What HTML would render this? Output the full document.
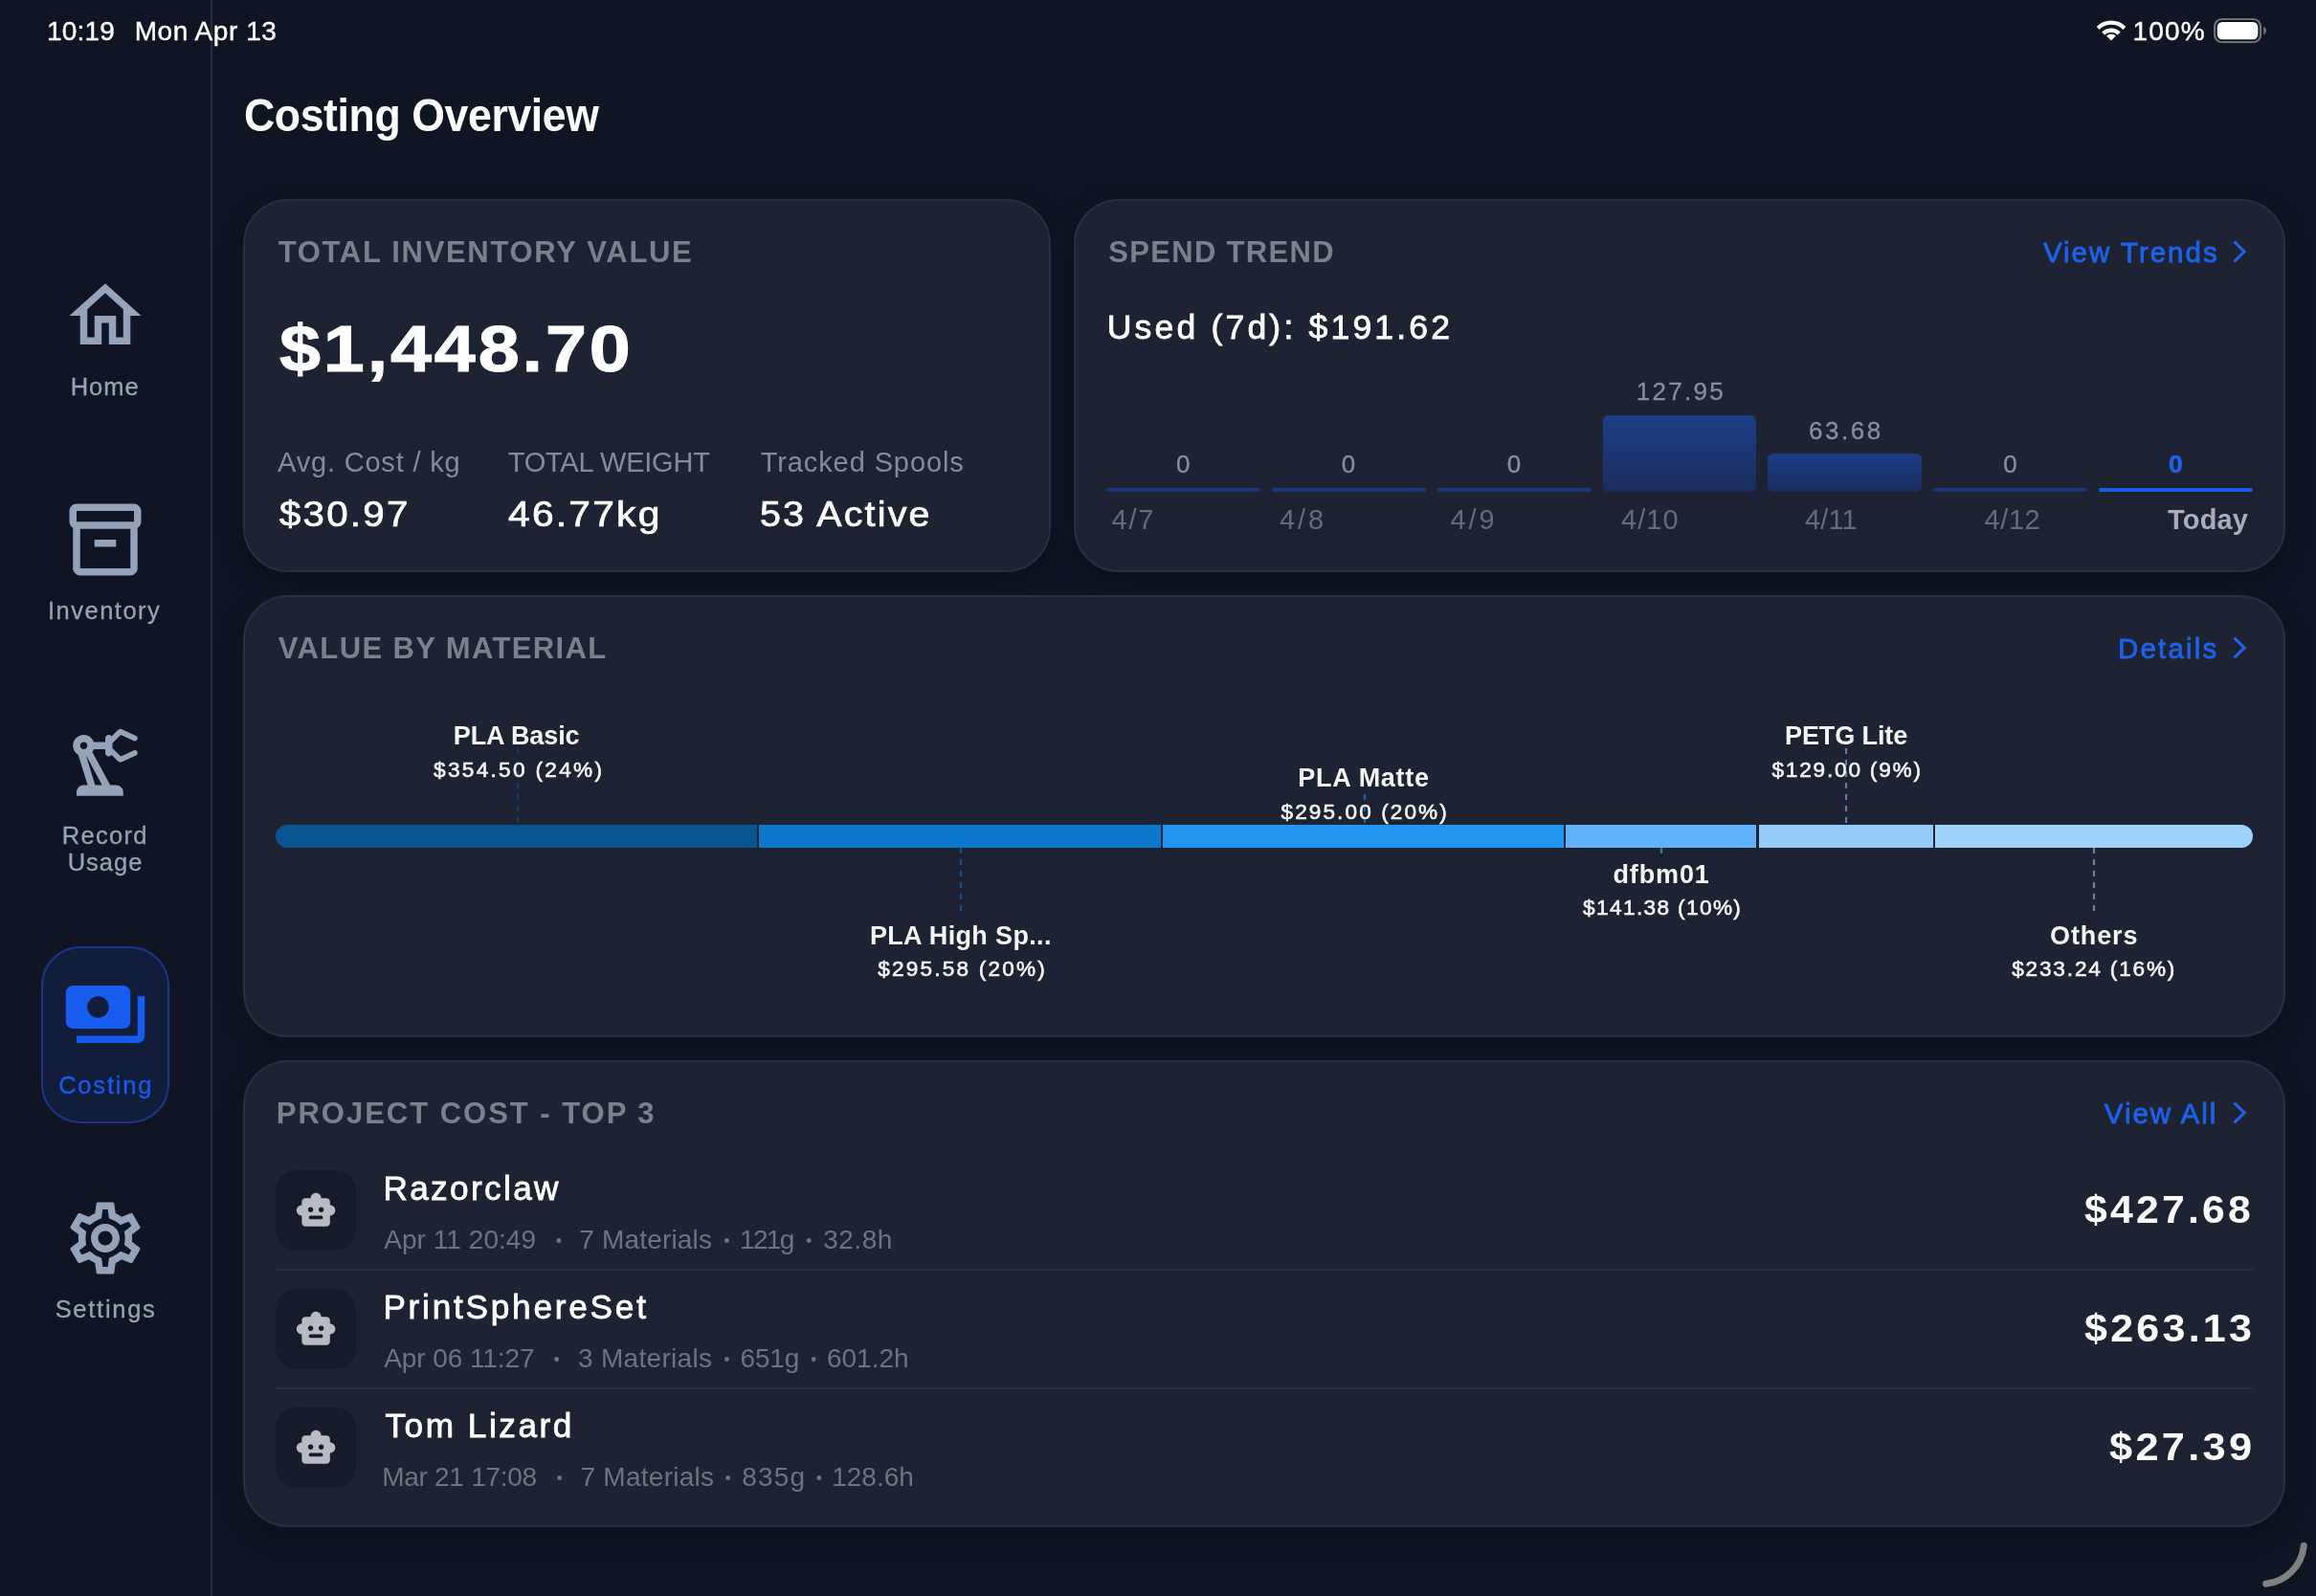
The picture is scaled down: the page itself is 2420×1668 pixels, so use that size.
<!DOCTYPE html>
<html lang="en"><head><meta charset="utf-8"><title>Costing Overview</title>
<style>
html,body{margin:0;padding:0;}
body{width:2420px;height:1668px;overflow:hidden;background:#0f1522;position:relative;font-family:"Liberation Sans",sans-serif;}
.t{position:absolute;white-space:nowrap;}
.ic{position:absolute;display:block;}
.card{position:absolute;background:#1d2333;border:2px solid #28303d;border-radius:47px;box-sizing:border-box;box-shadow:0 8px 24px rgba(0,0,0,.25);}
.abs{position:absolute;}
</style></head><body><div id="app" style="position:absolute;left:0;top:0;width:2420px;height:1668px;will-change:transform;">
<div class="abs" style="left:0;top:0;width:220px;height:1668px;background:#0f1522;border-right:2px solid #262e3b;"></div>
<div class="t" style="left:49.00px;top:19px;font-size:28px;line-height:28px;color:#ffffff;letter-spacing:0.20px;-webkit-text-stroke:0.4px #ffffff;">10:19</div>
<div class="t" style="left:140.70px;top:19px;font-size:28px;line-height:28px;color:#ffffff;letter-spacing:0.55px;-webkit-text-stroke:0.4px #ffffff;">Mon Apr 13</div>
<div class="t" style="left:2228.60px;top:19px;font-size:28px;line-height:28px;color:#ffffff;letter-spacing:1.16px;-webkit-text-stroke:0.4px #ffffff;">100%</div>
<svg class="ic" style="left:2189px;top:19px" width="34" height="26" viewBox="0 0 34 26"><g fill="none" stroke="#fff" stroke-width="4.2"><path d="M3.2 10.4a19.6 19.6 0 0 1 27.6 0"/><path d="M8.7 16a11.8 11.8 0 0 1 16.6 0"/></g><path d="M17 23.6l-4.9-5.1a7 7 0 0 1 9.8 0z" fill="#fff"/></svg>
<svg class="ic" style="left:2311px;top:17px" width="60" height="30" viewBox="0 0 60 30"><rect x="3.1" y="3" width="48" height="24" rx="7.5" fill="none" stroke="#6d717c" stroke-width="2.2"/><rect x="5.8" y="5.9" width="42.6" height="18.3" rx="5.2" fill="#fff"/><path d="M54.2 10.8v8.4c1.9-.7 2.8-2.3 2.8-4.2s-.9-3.5-2.8-4.2z" fill="#6d717c"/></svg>
<svg class="ic" style="left:65.0px;top:285.1px" width="90" height="90" viewBox="0 0 24 24" fill="#94a3b8"><path d="M12 5.69l5 4.5V18h-2v-6H9v6H7v-7.81l5-4.5M12 3L2 12h3v8h6v-6h2v6h6v-8h3L12 3z"/></svg>
<div class="t" style="left:73.75px;top:392px;font-size:25.5px;line-height:25.5px;color:#94a3b8;letter-spacing:0.95px;-webkit-text-stroke:0.3px #94a3b8;">Home</div>
<svg class="ic" style="left:65.0px;top:519px" width="90" height="90" viewBox="0 0 24 24" fill="#94a3b8"><path d="M20 2H4c-1 0-2 .9-2 2v3.01c0 .72.43 1.34 1 1.69V20c0 1.1 1.1 2 2 2h14c.9 0 2-.9 2-2V8.7c.57-.35 1-.97 1-1.69V4c0-1.1-1-2-2-2zm-1 18H5V9h14v11zm1-13H4V4h16v3z"/><path d="M9 12h6v2H9z"/></svg>
<div class="t" style="left:49.95px;top:626px;font-size:25.5px;line-height:25.5px;color:#94a3b8;letter-spacing:1.50px;-webkit-text-stroke:0.3px #94a3b8;">Inventory</div>
<svg class="ic" style="left:65.0px;top:753px" width="90" height="90" viewBox="0 0 24 24" fill="#94a3b8"><path d="M19.93 8.35l-3.6 1.68L14 7.7V6.3l2.33-2.33 3.6 1.68c.38.18.82.01 1-.36.18-.38.01-.82-.36-1l-3.92-1.83c-.38-.18-.83-.1-1.13.2L13.78 4.4c-.18-.24-.46-.4-.78-.4-.55 0-1 .45-1 1v1H8.82C8.4 4.84 7.3 4 6 4 4.34 4 3 5.34 3 7c0 1.1.6 2.05 1.48 2.58L7.08 18H6c-1.1 0-2 .9-2 2v1h13v-1c0-1.1-.9-2-2-2h-1.62L8.41 8.77c.17-.24.31-.49.41-.77H12v1c0 .55.45 1 1 1 .32 0 .6-.16.78-.4l1.74 1.74c.3.3.75.38 1.13.2l3.92-1.83c.38-.18.54-.62.36-1-.18-.37-.62-.54-1-.36zM6 8c-.55 0-1-.45-1-1s.45-1 1-1 1 .45 1 1-.45 1-1 1zm5.11 10H9.17l-2.46-8h.1l4.3 8z"/></svg>
<div class="t" style="left:64.85px;top:861px;font-size:25.5px;line-height:25.5px;color:#94a3b8;letter-spacing:1.26px;-webkit-text-stroke:0.3px #94a3b8;">Record</div>
<div class="t" style="left:70.65px;top:889px;font-size:25.5px;line-height:25.5px;color:#94a3b8;letter-spacing:0.99px;-webkit-text-stroke:0.3px #94a3b8;">Usage</div>
<div class="abs" style="left:43px;top:989px;width:134px;height:185px;box-sizing:border-box;border-radius:41px;background:#111d3a;border:2px solid #17378a;"></div>
<svg class="ic" style="left:65.0px;top:1015px" width="90" height="90" viewBox="0 0 24 24" fill="#175cee"><path d="M19 14V6c0-1.1-.9-2-2-2H3c-1.1 0-2 .9-2 2v8c0 1.1.9 2 2 2h14c1.1 0 2-.9 2-2zm-9-1c-1.66 0-3-1.34-3-3s1.34-3 3-3 3 1.34 3 3-1.34 3-3 3zm13-6v11c0 1.1-.9 2-2 2H4v-2h17V7h2z"/></svg>
<div class="t" style="left:61.15px;top:1122px;font-size:25.5px;line-height:25.5px;color:#175cee;letter-spacing:1.80px;-webkit-text-stroke:0.3px #175cee;">Costing</div>
<svg class="ic" style="left:65.0px;top:1249px" width="90" height="90" viewBox="0 0 24 24" fill="#94a3b8"><path d="M19.43 12.98c.04-.32.07-.64.07-.98 0-.34-.03-.66-.07-.98l2.11-1.65c.19-.15.24-.42.12-.64l-2-3.46c-.09-.16-.26-.25-.44-.25-.06 0-.12.01-.17.03l-2.49 1c-.52-.4-1.08-.73-1.69-.98l-.38-2.65C14.46 2.18 14.25 2 14 2h-4c-.25 0-.46.18-.49.42l-.38 2.65c-.61.25-1.17.59-1.69.98l-2.49-1c-.06-.02-.12-.03-.18-.03-.17 0-.34.09-.43.25l-2 3.46c-.13.22-.07.49.12.64l2.11 1.65c-.04.32-.07.65-.07.98 0 .33.03.66.07.98l-2.11 1.65c-.19.15-.24.42-.12.64l2 3.46c.09.16.26.25.44.25.06 0 .12-.01.17-.03l2.49-1c.52.4 1.08.73 1.69.98l.38 2.65c.03.24.24.42.49.42h4c.25 0 .46-.18.49-.42l.38-2.65c.61-.25 1.17-.59 1.69-.98l2.49 1c.06.02.12.03.18.03.17 0 .34-.09.43-.25l2-3.46c.12-.22.07-.49-.12-.64l-2.11-1.65zm-1.98-1.71c.04.31.05.52.05.73 0 .21-.02.43-.05.73l-.14 1.13.89.7 1.08.84-.7 1.21-1.27-.51-1.04-.42-.9.68c-.43.32-.84.56-1.25.73l-1.06.43-.16 1.13-.2 1.35h-1.4l-.19-1.35-.16-1.13-1.06-.43c-.43-.18-.83-.41-1.23-.71l-.91-.7-1.06.43-1.27.51-.7-1.21 1.08-.84.89-.7-.14-1.13c-.03-.31-.05-.54-.05-.74s.02-.43.05-.73l.14-1.13-.89-.7-1.08-.84.7-1.21 1.27.51 1.04.42.9-.68c.43-.32.84-.56 1.25-.73l1.06-.43.16-1.13.2-1.35h1.39l.19 1.35.16 1.13 1.06.43c.43.18.83.41 1.23.71l.91.7 1.06-.43 1.27-.51.7 1.21-1.07.85-.89.7.14 1.13zM12 8c-2.21 0-4 1.79-4 4s1.79 4 4 4 4-1.79 4-4-1.79-4-4-4zm0 6c-1.1 0-2-.9-2-2s.9-2 2-2 2 .9 2 2-.9 2-2 2z"/></svg>
<div class="t" style="left:57.65px;top:1356px;font-size:25.5px;line-height:25.5px;color:#94a3b8;letter-spacing:1.72px;-webkit-text-stroke:0.3px #94a3b8;">Settings</div>
<div class="t" style="left:254.76px;top:97px;font-size:47.5px;line-height:47.5px;color:#fff;font-weight:700;letter-spacing:-0.40px;transform:scaleX(0.9386);transform-origin:0 0;">Costing Overview</div>
<div class="card" style="left:254px;top:208px;width:844px;height:390px"></div>
<div class="card" style="left:1122px;top:208px;width:1266px;height:390px"></div>
<div class="card" style="left:254px;top:622px;width:2134px;height:462px"></div>
<div class="card" style="left:254px;top:1108px;width:2134px;height:488px"></div>
<div class="t" style="left:290.70px;top:248px;font-size:31px;line-height:31px;color:#7b808b;font-weight:700;letter-spacing:1.68px;">TOTAL INVENTORY VALUE</div>
<div class="t" style="left:291.77px;top:330px;font-size:68px;line-height:68px;color:#fff;font-weight:700;letter-spacing:2.50px;-webkit-text-stroke:1.0px #fff;transform:scaleX(1.1371);transform-origin:0 0;">$1,448.70</div>
<div class="t" style="left:290.00px;top:469px;font-size:29px;line-height:29px;color:#868b95;letter-spacing:0.82px;">Avg. Cost / kg</div>
<div class="t" style="left:530.75px;top:469px;font-size:29px;line-height:29px;color:#868b95;letter-spacing:-0.24px;">TOTAL WEIGHT</div>
<div class="t" style="left:794.70px;top:469px;font-size:29px;line-height:29px;color:#868b95;letter-spacing:0.90px;">Tracked Spools</div>
<div class="t" style="left:291.59px;top:520px;font-size:36.2px;line-height:36.2px;color:#fff;letter-spacing:2.00px;-webkit-text-stroke:0.7px #fff;transform:scaleX(1.1126);transform-origin:0 0;">$30.97</div>
<div class="t" style="left:531.14px;top:520px;font-size:36.2px;line-height:36.2px;color:#fff;letter-spacing:2.00px;-webkit-text-stroke:0.7px #fff;transform:scaleX(1.1249);transform-origin:0 0;">46.77kg</div>
<div class="t" style="left:793.99px;top:520px;font-size:36.2px;line-height:36.2px;color:#fff;letter-spacing:2.00px;-webkit-text-stroke:0.7px #fff;transform:scaleX(1.0898);transform-origin:0 0;">53 Active</div>
<div class="t" style="left:1158.25px;top:248px;font-size:31px;line-height:31px;color:#7b808b;font-weight:700;letter-spacing:1.32px;">SPEND TREND</div>
<div class="t" style="left:2134.90px;top:249px;font-size:29.5px;line-height:29.5px;color:#1d62ea;letter-spacing:2.00px;-webkit-text-stroke:0.8px #1d62ea;">View Trends</div>
<svg class="ic" style="left:2329.8px;top:249.2px" width="20" height="28" viewBox="0 0 20 28"><path d="M4.6 3.6L15.1 14 4.6 24.4" fill="none" stroke="#1d62ea" stroke-width="3" stroke-linecap="butt" stroke-linejoin="miter"/></svg>
<div class="t" style="left:1156.65px;top:325px;font-size:35.6px;line-height:35.6px;color:#fff;letter-spacing:3.17px;-webkit-text-stroke:0.8px #fff;">Used (7d): $191.62</div>
<div class="abs" style="left:1156.00px;top:509.8px;width:160.86px;height:4.0px;background:linear-gradient(180deg,#1d3d88 0%,#1b3168 100%);border-radius:2px"></div>
<div class="t" style="left:1228.93px;top:472px;font-size:26px;line-height:26px;color:#8a8f99;-webkit-text-stroke:0.3px #8a8f99;">0</div>
<div class="abs" style="left:1328.86px;top:509.8px;width:160.86px;height:4.0px;background:linear-gradient(180deg,#1d3d88 0%,#1b3168 100%);border-radius:2px"></div>
<div class="t" style="left:1401.79px;top:472px;font-size:26px;line-height:26px;color:#8a8f99;-webkit-text-stroke:0.3px #8a8f99;">0</div>
<div class="abs" style="left:1501.72px;top:509.8px;width:160.86px;height:4.0px;background:linear-gradient(180deg,#1d3d88 0%,#1b3168 100%);border-radius:2px"></div>
<div class="t" style="left:1574.65px;top:472px;font-size:26px;line-height:26px;color:#8a8f99;-webkit-text-stroke:0.3px #8a8f99;">0</div>
<div class="abs" style="left:1674.58px;top:434.2px;width:160.86px;height:79.6px;background:linear-gradient(180deg,#1c3d86 0%,#1b2d5e 100%);border-radius:6px"></div>
<div class="t" style="left:1709.85px;top:396px;font-size:26px;line-height:26px;color:#8a8f99;letter-spacing:2.29px;-webkit-text-stroke:0.3px #8a8f99;">127.95</div>
<div class="abs" style="left:1847.44px;top:474.3px;width:160.86px;height:39.5px;background:linear-gradient(180deg,#1c3d86 0%,#1b2d5e 100%);border-radius:6px"></div>
<div class="t" style="left:1889.95px;top:437px;font-size:26px;line-height:26px;color:#8a8f99;letter-spacing:2.57px;-webkit-text-stroke:0.3px #8a8f99;">63.68</div>
<div class="abs" style="left:2020.30px;top:509.8px;width:160.86px;height:4.0px;background:linear-gradient(180deg,#1d3d88 0%,#1b3168 100%);border-radius:2px"></div>
<div class="t" style="left:2093.23px;top:472px;font-size:26px;line-height:26px;color:#8a8f99;-webkit-text-stroke:0.3px #8a8f99;">0</div>
<div class="abs" style="left:2193.16px;top:509.8px;width:160.86px;height:4.0px;background:#185de2;border-radius:2px"></div>
<div class="t" style="left:2266.09px;top:472px;font-size:26.5px;line-height:26.5px;color:#1c64ec;font-weight:700;-webkit-text-stroke:0.5px #1c64ec;">0</div>
<div class="t" style="left:1161.60px;top:529px;font-size:29px;line-height:29px;color:#666b76;letter-spacing:1.76px;">4/7</div>
<div class="t" style="left:1337.00px;top:529px;font-size:29px;line-height:29px;color:#666b76;letter-spacing:2.91px;">4/8</div>
<div class="t" style="left:1515.50px;top:529px;font-size:29px;line-height:29px;color:#666b76;letter-spacing:2.91px;">4/9</div>
<div class="t" style="left:1693.90px;top:529px;font-size:29px;line-height:29px;color:#666b76;letter-spacing:1.13px;">4/10</div>
<div class="t" style="left:1886.00px;top:529px;font-size:29px;line-height:29px;color:#666b76;letter-spacing:0.15px;">4/11</div>
<div class="t" style="left:2073.60px;top:529px;font-size:29px;line-height:29px;color:#666b76;letter-spacing:0.56px;">4/12</div>
<div class="t" style="left:2265.10px;top:529px;font-size:29px;line-height:29px;color:#aaadb6;font-weight:700;letter-spacing:0.15px;">Today</div>
<div class="t" style="left:290.80px;top:662px;font-size:31px;line-height:31px;color:#7b808b;font-weight:700;letter-spacing:1.38px;">VALUE BY MATERIAL</div>
<div class="t" style="left:2213.10px;top:663px;font-size:29.5px;line-height:29.5px;color:#1d62ea;letter-spacing:2.16px;-webkit-text-stroke:0.8px #1d62ea;">Details</div>
<svg class="ic" style="left:2329.8px;top:662.6px" width="20" height="28" viewBox="0 0 20 28"><path d="M4.6 3.6L15.1 14 4.6 24.4" fill="none" stroke="#1d62ea" stroke-width="3" stroke-linecap="butt" stroke-linejoin="miter"/></svg>
<div class="abs" style="left:288px;top:862px;width:2066px;height:24px;border-radius:12px;overflow:hidden;background:#1d2333"><div class="abs" style="left:0.0px;top:0;width:503.0px;height:24px;background:#08548e"></div><div class="abs" style="left:505.0px;top:0;width:419.7px;height:24px;background:#0d77cc"></div><div class="abs" style="left:926.7px;top:0;width:419.2px;height:24px;background:#2196f3"></div><div class="abs" style="left:1347.9px;top:0;width:199.6px;height:24px;background:#5fb2f7"></div><div class="abs" style="left:1549.5px;top:0;width:182.0px;height:24px;background:#93cbf9"></div><div class="abs" style="left:1733.5px;top:0;width:332.5px;height:24px;background:#a0d3fb"></div></div>
<svg class="ic" style="left:538.9px;top:782px" width="4" height="80" viewBox="0 0 4 80"><line x1="2" y1="0" x2="2" y2="80" stroke="#08548e" stroke-opacity="0.55" stroke-width="2.2" stroke-dasharray="6 6"/></svg>
<div class="t" style="left:473.80px;top:756px;font-size:27px;line-height:27px;color:#f4f5f7;font-weight:700;letter-spacing:-0.09px;">PLA Basic</div>
<div class="t" style="left:453.00px;top:794px;font-size:22.6px;line-height:22.6px;color:#f4f5f7;letter-spacing:2.31px;-webkit-text-stroke:0.6px #f4f5f7;">$354.50 (24%)</div>
<svg class="ic" style="left:1002.0px;top:886px" width="4" height="66" viewBox="0 0 4 66"><line x1="2" y1="0" x2="2" y2="66" stroke="#0d77cc" stroke-opacity="0.55" stroke-width="2.2" stroke-dasharray="6 6"/></svg>
<div class="t" style="left:908.90px;top:965px;font-size:27px;line-height:27px;color:#f4f5f7;font-weight:700;letter-spacing:0.35px;">PLA High Sp...</div>
<div class="t" style="left:917.30px;top:1002px;font-size:22.6px;line-height:22.6px;color:#f4f5f7;letter-spacing:2.18px;-webkit-text-stroke:0.6px #f4f5f7;">$295.58 (20%)</div>
<svg class="ic" style="left:1423.5px;top:830px" width="4" height="32" viewBox="0 0 4 32"><line x1="2" y1="0" x2="2" y2="32" stroke="#2196f3" stroke-opacity="0.55" stroke-width="2.2" stroke-dasharray="6 6"/></svg>
<div class="t" style="left:1356.30px;top:800px;font-size:27px;line-height:27px;color:#f4f5f7;font-weight:700;letter-spacing:0.71px;">PLA Matte</div>
<div class="t" style="left:1338.50px;top:838px;font-size:22.6px;line-height:22.6px;color:#f4f5f7;letter-spacing:2.09px;-webkit-text-stroke:0.6px #f4f5f7;">$295.00 (20%)</div>
<svg class="ic" style="left:1734.4px;top:886px" width="4" height="6" viewBox="0 0 4 6"><line x1="2" y1="0" x2="2" y2="6" stroke="#5fb2f7" stroke-opacity="0.55" stroke-width="2.2" stroke-dasharray="6 6"/></svg>
<div class="t" style="left:1685.50px;top:901px;font-size:27px;line-height:27px;color:#f4f5f7;font-weight:700;letter-spacing:0.86px;">dfbm01</div>
<div class="t" style="left:1654.10px;top:938px;font-size:22.6px;line-height:22.6px;color:#f4f5f7;letter-spacing:1.38px;-webkit-text-stroke:0.6px #f4f5f7;">$141.38 (10%)</div>
<svg class="ic" style="left:1927.1px;top:782px" width="4" height="80" viewBox="0 0 4 80"><line x1="2" y1="0" x2="2" y2="80" stroke="#93cbf9" stroke-opacity="0.55" stroke-width="2.2" stroke-dasharray="6 6"/></svg>
<div class="t" style="left:1865.00px;top:756px;font-size:27px;line-height:27px;color:#f4f5f7;font-weight:700;letter-spacing:-0.10px;">PETG Lite</div>
<div class="t" style="left:1851.50px;top:794px;font-size:22.6px;line-height:22.6px;color:#f4f5f7;letter-spacing:1.80px;-webkit-text-stroke:0.6px #f4f5f7;">$129.00 (9%)</div>
<svg class="ic" style="left:2185.6px;top:886px" width="4" height="66" viewBox="0 0 4 66"><line x1="2" y1="0" x2="2" y2="66" stroke="#a0d3fb" stroke-opacity="0.55" stroke-width="2.2" stroke-dasharray="6 6"/></svg>
<div class="t" style="left:2142.00px;top:965px;font-size:27px;line-height:27px;color:#f4f5f7;font-weight:700;letter-spacing:0.90px;">Others</div>
<div class="t" style="left:2102.20px;top:1002px;font-size:22.6px;line-height:22.6px;color:#f4f5f7;letter-spacing:1.83px;-webkit-text-stroke:0.6px #f4f5f7;">$233.24 (16%)</div>
<div class="t" style="left:288.80px;top:1148px;font-size:31px;line-height:31px;color:#7b808b;font-weight:700;letter-spacing:1.98px;">PROJECT COST - TOP 3</div>
<div class="t" style="left:2198.80px;top:1149px;font-size:29.5px;line-height:29.5px;color:#1d62ea;letter-spacing:1.95px;-webkit-text-stroke:0.8px #1d62ea;">View All</div>
<svg class="ic" style="left:2329.8px;top:1149.1px" width="20" height="28" viewBox="0 0 20 28"><path d="M4.6 3.6L15.1 14 4.6 24.4" fill="none" stroke="#1d62ea" stroke-width="3" stroke-linecap="butt" stroke-linejoin="miter"/></svg>
<div class="abs" style="left:288px;top:1223.0px;width:84px;height:84px;border-radius:22px;background:#151b29"></div>
<svg class="ic" style="left:307.9px;top:1243.1px" width="44.2" height="44.2" viewBox="0 0 24 24" fill="#b9bbc2"><path d="M20 9V7c0-1.1-.9-2-2-2h-3c0-1.66-1.34-3-3-3S9 3.34 9 5H6c-1.1 0-2 .9-2 2v2c-1.66 0-3 1.34-3 3s1.34 3 3 3v4c0 1.1.9 2 2 2h12c1.1 0 2-.9 2-2v-4c1.66 0 3-1.34 3-3s-1.34-3-3-3zM7.5 11.5c0-.83.67-1.5 1.5-1.5s1.5.67 1.5 1.5S9.83 13 9 13s-1.5-.67-1.5-1.5zM15 17H9c-.55 0-1-.45-1-1s.45-1 1-1h6c.55 0 1 .45 1 1s-.45 1-1 1zm0-4c-.83 0-1.5-.67-1.5-1.5S14.17 10 15 10s1.5.67 1.5 1.5S15.83 13 15 13z"/></svg>
<div class="t" style="left:400.40px;top:1224px;font-size:35.2px;line-height:35.2px;color:#fff;letter-spacing:2.36px;-webkit-text-stroke:0.8px #fff;">Razorclaw</div>
<div class="t" style="left:401.25px;top:1282px;font-size:28px;line-height:28px;color:#6e737d;letter-spacing:0.05px;">Apr 11 20:49</div>
<div class="t" style="left:605.25px;top:1282px;font-size:28px;line-height:28px;color:#6e737d;letter-spacing:0.18px;">7 Materials</div>
<div class="t" style="left:773.00px;top:1282px;font-size:28px;line-height:28px;color:#6e737d;letter-spacing:-1.66px;">121g</div>
<div class="t" style="left:860.25px;top:1282px;font-size:28px;line-height:28px;color:#6e737d;letter-spacing:0.50px;">32.8h</div>
<div class="t" style="left:580.75px;top:1288px;font-size:18px;line-height:18px;color:#6e737d;">•</div>
<div class="t" style="left:756.25px;top:1288px;font-size:18px;line-height:18px;color:#6e737d;">•</div>
<div class="t" style="left:842.00px;top:1288px;font-size:18px;line-height:18px;color:#6e737d;">•</div>
<div class="t" style="left:2178.40px;top:1244px;font-size:40px;line-height:40px;color:#fff;font-weight:700;letter-spacing:3.00px;transform:scaleX(1.0693);transform-origin:0 0;">$427.68</div>
<div class="abs" style="left:288px;top:1326.0px;width:2066px;height:2px;background:#282e3f"></div>
<div class="abs" style="left:288px;top:1347.0px;width:84px;height:84px;border-radius:22px;background:#151b29"></div>
<svg class="ic" style="left:307.9px;top:1367.1px" width="44.2" height="44.2" viewBox="0 0 24 24" fill="#b9bbc2"><path d="M20 9V7c0-1.1-.9-2-2-2h-3c0-1.66-1.34-3-3-3S9 3.34 9 5H6c-1.1 0-2 .9-2 2v2c-1.66 0-3 1.34-3 3s1.34 3 3 3v4c0 1.1.9 2 2 2h12c1.1 0 2-.9 2-2v-4c1.66 0 3-1.34 3-3s-1.34-3-3-3zM7.5 11.5c0-.83.67-1.5 1.5-1.5s1.5.67 1.5 1.5S9.83 13 9 13s-1.5-.67-1.5-1.5zM15 17H9c-.55 0-1-.45-1-1s.45-1 1-1h6c.55 0 1 .45 1 1s-.45 1-1 1zm0-4c-.83 0-1.5-.67-1.5-1.5S14.17 10 15 10s1.5.67 1.5 1.5S15.83 13 15 13z"/></svg>
<div class="t" style="left:400.40px;top:1348px;font-size:35.2px;line-height:35.2px;color:#fff;letter-spacing:2.76px;-webkit-text-stroke:0.8px #fff;">PrintSphereSet</div>
<div class="t" style="left:401.25px;top:1406px;font-size:28px;line-height:28px;color:#6e737d;letter-spacing:-0.09px;">Apr 06 11:27</div>
<div class="t" style="left:604.00px;top:1406px;font-size:28px;line-height:28px;color:#6e737d;letter-spacing:0.31px;">3 Materials</div>
<div class="t" style="left:773.50px;top:1406px;font-size:28px;line-height:28px;color:#6e737d;letter-spacing:-0.16px;">651g</div>
<div class="t" style="left:864.00px;top:1406px;font-size:28px;line-height:28px;color:#6e737d;letter-spacing:-0.01px;">601.2h</div>
<div class="t" style="left:578.50px;top:1412px;font-size:18px;line-height:18px;color:#6e737d;">•</div>
<div class="t" style="left:756.25px;top:1412px;font-size:18px;line-height:18px;color:#6e737d;">•</div>
<div class="t" style="left:847.00px;top:1412px;font-size:18px;line-height:18px;color:#6e737d;">•</div>
<div class="t" style="left:2178.40px;top:1368px;font-size:40px;line-height:40px;color:#fff;font-weight:700;letter-spacing:3.00px;transform:scaleX(1.0760);transform-origin:0 0;">$263.13</div>
<div class="abs" style="left:288px;top:1450.0px;width:2066px;height:2px;background:#282e3f"></div>
<div class="abs" style="left:288px;top:1471.0px;width:84px;height:84px;border-radius:22px;background:#151b29"></div>
<svg class="ic" style="left:307.9px;top:1491.1px" width="44.2" height="44.2" viewBox="0 0 24 24" fill="#b9bbc2"><path d="M20 9V7c0-1.1-.9-2-2-2h-3c0-1.66-1.34-3-3-3S9 3.34 9 5H6c-1.1 0-2 .9-2 2v2c-1.66 0-3 1.34-3 3s1.34 3 3 3v4c0 1.1.9 2 2 2h12c1.1 0 2-.9 2-2v-4c1.66 0 3-1.34 3-3s-1.34-3-3-3zM7.5 11.5c0-.83.67-1.5 1.5-1.5s1.5.67 1.5 1.5S9.83 13 9 13s-1.5-.67-1.5-1.5zM15 17H9c-.55 0-1-.45-1-1s.45-1 1-1h6c.55 0 1 .45 1 1s-.45 1-1 1zm0-4c-.83 0-1.5-.67-1.5-1.5S14.17 10 15 10s1.5.67 1.5 1.5S15.83 13 15 13z"/></svg>
<div class="t" style="left:402.40px;top:1472px;font-size:35.2px;line-height:35.2px;color:#fff;letter-spacing:2.55px;-webkit-text-stroke:0.8px #fff;">Tom Lizard</div>
<div class="t" style="left:399.25px;top:1530px;font-size:28px;line-height:28px;color:#6e737d;letter-spacing:-0.29px;">Mar 21 17:08</div>
<div class="t" style="left:606.50px;top:1530px;font-size:28px;line-height:28px;color:#6e737d;letter-spacing:0.26px;">7 Materials</div>
<div class="t" style="left:775.25px;top:1530px;font-size:28px;line-height:28px;color:#6e737d;letter-spacing:1.18px;">835g</div>
<div class="t" style="left:869.25px;top:1530px;font-size:28px;line-height:28px;color:#6e737d;letter-spacing:-0.01px;">128.6h</div>
<div class="t" style="left:581.50px;top:1536px;font-size:18px;line-height:18px;color:#6e737d;">•</div>
<div class="t" style="left:757.50px;top:1536px;font-size:18px;line-height:18px;color:#6e737d;">•</div>
<div class="t" style="left:852.75px;top:1536px;font-size:18px;line-height:18px;color:#6e737d;">•</div>
<div class="t" style="left:2204.33px;top:1492px;font-size:40px;line-height:40px;color:#fff;font-weight:700;letter-spacing:3.00px;transform:scaleX(1.0850);transform-origin:0 0;">$27.39</div>
<svg class="ic" style="left:2350px;top:1600px" width="70" height="68" viewBox="0 0 70 68"><path d="M57.3 15.6A44.5 44.5 0 0 1 17.65 55.26" fill="none" stroke="#808080" stroke-width="7" stroke-linecap="round"/></svg>
</div></body></html>
